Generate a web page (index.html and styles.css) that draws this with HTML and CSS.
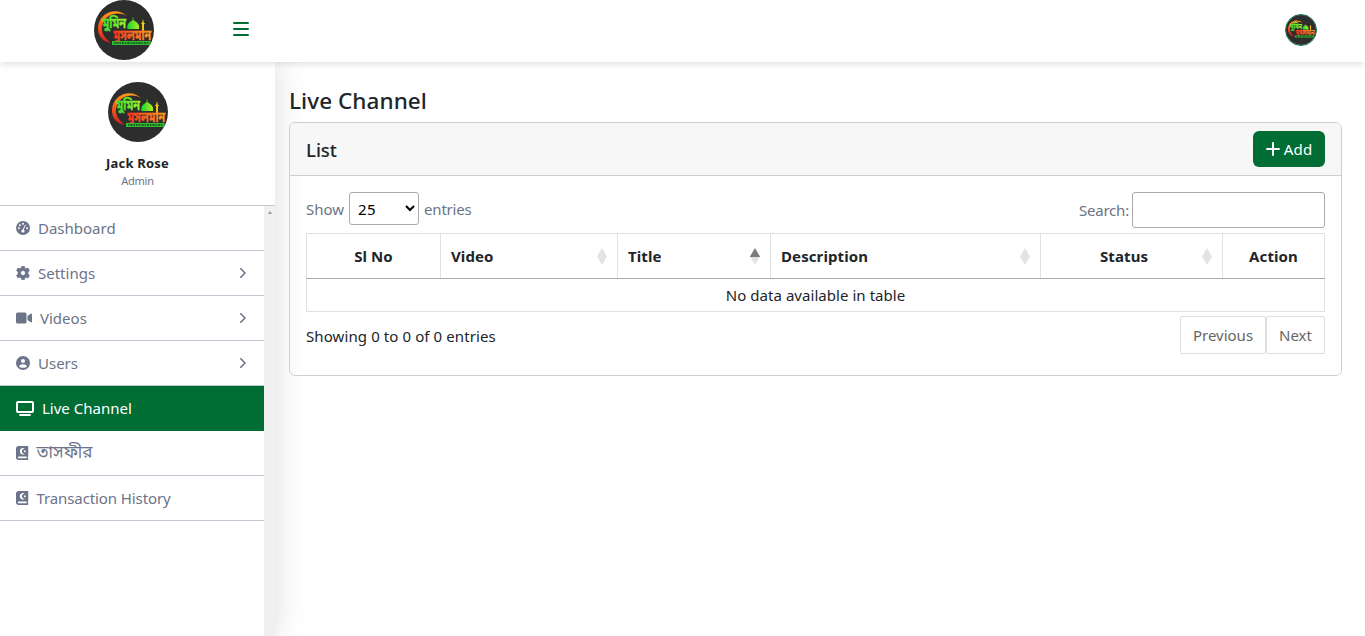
FILE: index.html
```
<!DOCTYPE html>
<html lang="en">
<head>
<meta charset="utf-8">
<title>Live Channel</title>
<link rel="stylesheet" href="styles.css">
</head>
<body>
<svg class="defs" width="0" height="0" aria-hidden="true">
  <defs>
    <linearGradient id="moon" x1="0" y1="0" x2="0" y2="1"><stop offset="0" stop-color="#ff9a18"/><stop offset=".5" stop-color="#f8541c"/><stop offset="1" stop-color="#c9201c"/></linearGradient>
    <linearGradient id="word1" x1="0" y1="0" x2="1" y2="0"><stop offset="0" stop-color="#39e02c"/><stop offset="1" stop-color="#9af02c"/></linearGradient>
    <linearGradient id="word2" x1="0" y1="0" x2="1" y2="0"><stop offset="0" stop-color="#f8331c"/><stop offset="1" stop-color="#ff9a1e"/></linearGradient>
    <linearGradient id="dome" x1="0" y1="0" x2="1" y2="0"><stop offset="0" stop-color="#14d932"/><stop offset="1" stop-color="#b5ee1c"/></linearGradient>
    <symbol id="logo" viewBox="0 0 60 60">
      <circle cx="30" cy="30" r="30" fill="#2d2d2e"/>
      <path d="M33 16C24 7 8 11 4.500 24C2 34 8 42 17 43C9 37 6 30 9 23C13 14 23 11 33 16Z" fill="url(#moon)"/>
      <path d="M33.500 29C32.500 23.500 36 22 38.700 20V17.500H39.400V20C42 22 46 23.500 45 29Z" fill="url(#dome)"/>
      <path d="M48 32V24H47.200V23H48L49 19L50 23H50.800V24H50V32Z" fill="#f2c51c"/>
      <text x="8.500" y="28" textLength="23.500" lengthAdjust="spacingAndGlyphs" class="logo-word" fill="url(#word1)" stroke="url(#word1)">মুমিন</text>
      <text x="19.500" y="39.500" textLength="37.500" lengthAdjust="spacingAndGlyphs" class="logo-word" fill="url(#word2)" stroke="url(#word2)">মুসলমান</text>
      <rect x="18" y="41" width="38.500" height="4" fill="#2fbd31"/>
      <path d="M20 43H55" stroke="#174f1d" stroke-width="1.500" stroke-dasharray="1.500 .8 2.500 .7"/>
    </symbol>
    <symbol id="quran" viewBox="0 0 12.500 14"><path fill="currentColor" d="M2.600 0H11.800C12.200 0 12.500 .3 12.500 .7V9.800C12.500 10.200 12.300 10.400 12 10.500V12.300C12.300 12.400 12.500 12.700 12.500 13C12.500 13.600 12.200 14 11.700 14H2.600C1.200 14 0 12.900 0 11.500V2.500C0 1.100 1.200 0 2.600 0Z"/><path d="M2.700 10.500H10.700V12.300H2.700C1.500 12.300 1.500 10.500 2.700 10.500Z" fill="#fff"/><path d="M8.600 2.600C7.300 1.500 3.800 2.200 3.800 5.300C3.800 8.400 7.300 9.200 8.700 7.900C6.900 7.900 5.900 6.800 5.900 5.300C5.900 3.900 7 2.800 8.600 2.600Z" fill="#fff"/><path d="M8.800 3.800L9.200 4.700L10.200 4.800L9.500 5.500L9.700 6.500L8.800 6L7.900 6.500L8.100 5.500L7.400 4.800L8.400 4.700Z" fill="#fff"/></symbol>
    <symbol id="chevron" viewBox="0 0 6 10"><path d="M.8.8L5 5L.8 9.200" fill="none" stroke="currentColor" stroke-width="1.600" stroke-linecap="round" stroke-linejoin="round"/></symbol>
  </defs>
</svg>

<header class="topbar">
  <svg class="brand"><use href="#logo"/></svg>
  <svg class="menu-toggle" viewBox="0 0 16 14"><path d="M1 1H15M1 7H15M1 13H15" stroke="currentColor" stroke-width="2" stroke-linecap="round"/></svg>
  <span class="user"><svg><use href="#logo"/></svg></span>
</header>

<div class="layout">
  <aside class="sidebar">
    <div class="profile">
      <svg class="avatar"><use href="#logo"/></svg>
      <strong class="name">Jack Rose</strong>
      <span class="role">Admin</span>
    </div>
    <div class="scroll-area">
      <nav class="nav">
        <a class="item"><svg width="14" height="14" viewBox="0 0 14 14"><circle cx="7" cy="7" r="7" fill="currentColor"/><g fill="#fff"><circle cx="7" cy="2.700" r="1"/><circle cx="3.900" cy="4.200" r="1"/><circle cx="2.900" cy="7.300" r="1"/><circle cx="11.200" cy="7.300" r="1"/></g><path d="M6.900 9.200L9.600 3.800" stroke="#fff" stroke-width="1"/><circle cx="7" cy="10" r="1.600" fill="#fff"/></svg><span>Dashboard</span></a>
        <a class="item"><svg width="14" height="14" viewBox="0 0 14 14"><path fill="currentColor" stroke="currentColor" stroke-width=".6" stroke-linejoin="round" fill-rule="evenodd" d="M5.600 .3H8.400L8.800 2L10 2.700L12 2L13.500 4.500L12 6V8L13.500 9.500L12 12L10 11.300L8.800 12L8.400 13.700H5.600L5.200 12L4 11.300L2 12L.5 9.500L2 8V6L.5 4.500L2 2L4 2.700L5.200 2ZM7 4.600A2.400 2.400 0 1 0 7 9.400A2.400 2.400 0 1 0 7 4.600Z"/></svg><span>Settings</span><svg class="chev"><use href="#chevron"/></svg></a>
        <a class="item"><svg width="16" height="14" viewBox="0 0 16 14"><rect y="1.500" width="10.500" height="11" rx="1.500" fill="currentColor"/><path d="M11.500 5L14.800 2.700C15.400 2.300 16 2.600 16 3.300V10.700C16 11.400 15.400 11.700 14.800 11.300L11.500 9Z" fill="currentColor"/></svg><span>Videos</span><svg class="chev"><use href="#chevron"/></svg></a>
        <a class="item"><svg width="14" height="14" viewBox="0 0 14 14"><circle cx="7" cy="7" r="7" fill="currentColor"/><circle cx="7" cy="5.100" r="2" fill="#fff"/><path d="M3.200 10.700C3.400 7.500 10.600 7.500 10.800 10.700C9 12 5 12 3.200 10.700Z" fill="#fff"/></svg><span>Users</span><svg class="chev"><use href="#chevron"/></svg></a>
        <a class="item active"><svg width="18" height="15" viewBox="0 0 18 15"><rect x="1" y="1" width="16" height="10" rx="1" fill="none" stroke="currentColor" stroke-width="2"/><path d="M4 14H14" stroke="currentColor" stroke-width="1.800" stroke-linecap="round"/></svg><span>Live Channel</span></a>
        <a class="item"><svg width="12.500" height="14"><use href="#quran"/></svg><span class="bn">তাসফীর</span></a>
        <a class="item"><svg width="12.500" height="14"><use href="#quran"/></svg><span class="history">Transaction History</span></a>
      </nav>
      <div class="scrollbar"><i></i></div>
    </div>
  </aside>

  <main class="content">
    <h1 class="title">Live Channel</h1>
    <section class="card">
      <div class="card-head">
        <h2>List</h2>
        <button class="add" type="button"><svg width="14" height="14" viewBox="0 0 14 14"><path d="M7 1V13M1 7H13" stroke="currentColor" stroke-width="2" stroke-linecap="round"/></svg><span>Add</span></button>
      </div>
      <div class="card-body">
        <div class="controls">
          <label class="length"><span>Show</span><select><option>25</option></select><span class="entries">entries</span></label>
          <label class="search"><span>Search:</span><input type="text"></label>
        </div>
        <table class="grid">
          <colgroup><col class="c1"><col class="c2"><col class="c3"><col class="c4"><col class="c5"><col class="c6"></colgroup>
          <thead><tr>
            <th class="center">Sl No</th>
            <th><div class="sort">Video<i></i></div></th>
            <th><div class="sort asc">Title<i></i></div></th>
            <th><div class="sort">Description<i></i></div></th>
            <th class="center"><div class="sort mid">Status<i></i></div></th>
            <th class="center">Action</th>
          </tr></thead>
          <tbody><tr><td colspan="6">No data available in table</td></tr></tbody>
        </table>
        <div class="footer">
          <span class="info">Showing 0 to 0 of 0 entries</span>
          <div class="pager"><a class="prev">Previous</a><a class="next">Next</a></div>
        </div>
      </div>
    </section>
  </main>
</div>
</body>
</html>
```
FILE: styles.css
```
* { box-sizing: border-box; }
body { margin: 0; height: 636px; overflow: hidden; display: flex; flex-direction: column; background: #fff; color: #212529; font: 15px/24px "Segoe UI", "Noto Sans", "Open Sans", sans-serif; }
svg { display: block; flex: none; }
.defs { position: absolute; }
.logo-word { font: 700 14px "Noto Sans Bengali", "Noto Sans", sans-serif; stroke-width: .3; }

.topbar { position: relative; z-index: 2; height: 62px; flex: none; display: flex; align-items: center; padding: 0 48px 2px 94px; background: #fff; box-shadow: 0 1px 8px rgba(0,0,0,.16); }
.brand { width: 60px; height: 60px; }
.menu-toggle { width: 16px; height: 14px; margin: 0 0 2px 79px; color: #006d35; }
.user { margin-left: auto; border: 1px solid #087a48; border-radius: 50%; }
.user svg { width: 30px; height: 30px; }

.layout { flex: 1; display: flex; min-height: 0; }
.sidebar { width: 275px; flex: none; display: flex; flex-direction: column; background: #fff; box-shadow: 0 0 28px rgba(40,42,70,.17); }
.profile { height: 144px; flex: none; display: flex; flex-direction: column; align-items: center; padding-top: 20px; border-bottom: 1px solid #c9c9c9; }
.avatar { width: 60px; height: 60px; }
.name { margin-top: 12px; font-size: 13px; line-height: 18px; letter-spacing: .2px; }
.role { font-size: 11px; line-height: 18px; letter-spacing: -.2px; color: #6b7489; }
.scroll-area { flex: 1; display: flex; min-height: 0; }
.nav { flex: 1; }
.scrollbar { width: 11px; background: #f0f0f0; display: flex; justify-content: center; }
.scrollbar i { width: 0; height: 3px; margin-top: 5px; border: 2.500px solid transparent; border-top: 0; border-bottom: 3px solid #999; }
.item { display: flex; align-items: center; height: 45px; padding: 0 18px 0 16px; border-bottom: 1px solid #bcc5d0; color: #6b7489; }
.item span { margin-left: 8px; white-space: nowrap; }
.item .history { letter-spacing: -.1px; }
.item .bn { font-family: "Noto Sans Bengali", "Noto Sans", sans-serif; font-size: 17px; padding-top: 1px; }
.active { background: #006d35; border-color: #006d35; color: #fff; }
.chev { width: 6px; height: 10px; margin-left: auto; }

.content { flex: 1; min-width: 0; padding: 23px 23px 0 14px; }
.title { margin: 0 0 6px; font-size: 22.500px; font-weight: 500; line-height: 31px; letter-spacing: .06px; }
.card { height: 254px; border: 1px solid #cfcfcf; border-radius: 6px; }
.card-head { height: 53px; display: flex; align-items: center; justify-content: space-between; padding: 0 16px; background: #f7f7f7; border-bottom: 1px solid #cfcfcf; border-radius: 5px 5px 0 0; }
.card-head h2 { margin: 0; padding-top: 1px; font-size: 18.500px; font-weight: 500; }
.add { width: 72px; height: 36px; display: flex; align-items: center; justify-content: center; gap: 4px; padding: 0; border: 0; border-radius: 6px; background: #006d35; color: #fff; font: inherit; letter-spacing: .2px; }
.card-body { padding: 16px; }
.controls { height: 41px; display: flex; justify-content: space-between; align-items: flex-start; color: #6b7489; }
.length, .search { display: flex; align-items: center; }
.length select { width: 70px; height: 33px; margin: 0 5px; padding: 4px; border: 1px solid #aaa; border-radius: 3px; background: #fff; color: #000; font: inherit; letter-spacing: .4px; }
.entries, .search span { letter-spacing: -.2px; }
.search input { width: 193px; height: 36px; margin: 0 0 0 3px; border: 1px solid #aaa; border-radius: 3px; }
.grid { width: 1019px; table-layout: fixed; border-collapse: collapse; }
.c1 { width: 134px; } .c2 { width: 177px; } .c3 { width: 153px; } .c4 { width: 270px; } .c5 { width: 182px; } .c6 { width: 102px; }
.grid th { height: 45px; padding: 0 10px; border: 1px solid #dee2e6; border-bottom-color: #a9a9ab; text-align: left; letter-spacing: .1px; }
.grid .center { text-align: center; }
.grid td { height: 33px; padding: 0; border: 1px solid #dee2e6; text-align: center; letter-spacing: .05px; }
.sort { display: flex; align-items: center; justify-content: space-between; }
.sort i { width: 10px; height: 17px; margin-top: 1px; background: #e2e4e4; clip-path: polygon(50% 0, 100% 50%, 50% 100%, 0 50%); }
.sort.asc i { background: linear-gradient(#797b80 9px, #e2e4e4 9px); }
.sort.mid { padding-left: 49px; }
.footer { display: flex; justify-content: space-between; padding-top: 4px; }
.info { padding-top: 8px; letter-spacing: .1px; }
.pager { display: flex; color: #666; line-height: 36px; text-align: center; }
.pager a { border: 1px solid #ddd; border-radius: 2px; height: 38px; }
.prev { width: 86px; }
.next { width: 59px; }
```
